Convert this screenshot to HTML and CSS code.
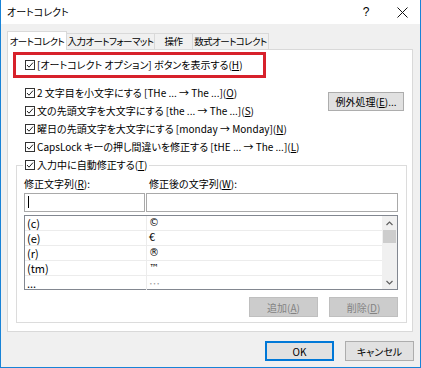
FILE: index.html
```html
<!DOCTYPE html>
<html lang="ja">
<head>
    <meta charset="UTF-8">
    <meta name="viewport" content="width=device-width, initial-scale=1.0">
    <title>オートコレクト</title>
    <link rel="stylesheet" href="styles.css">
</head>
<body>
    <div class="window">
        <div class="titlebar">
            <span class="title">オートコレクト</span>
            <span class="help">?</span>
            <span class="close">
                <svg width="11" height="11" viewBox="0 0 11 11"><path d="M0.5 0.5 L10.5 10.5 M10.5 0.5 L0.5 10.5" stroke="#111" stroke-width="1" fill="none"/></svg>
            </span>
        </div>

        <div class="tabs">
            <div class="tab active">オートコレクト</div>
            <div class="tab tab-format">入力オートフォーマット</div>
            <div class="tab tab-action">操作</div>
            <div class="tab tab-math">数式オートコレクト</div>
        </div>

        <div class="panel">
            <div class="highlight">
                <label class="check">
                    <svg class="cb" width="10" height="10" viewBox="0 0 10 10"><rect x="0.5" y="0.5" width="9" height="9" fill="#fff" stroke="#333"/><path d="M2 5 L4 7.2 L8 2.6" stroke="#222" stroke-width="1" fill="none"/></svg>
                    <span>[オートコレクト オプション] ボタンを表示する(<u>H</u>)</span>
                </label>
            </div>

            <div class="options">
                <div class="checks">
                    <label class="check">
                        <svg class="cb" width="10" height="10" viewBox="0 0 10 10"><rect x="0.5" y="0.5" width="9" height="9" fill="#fff" stroke="#333"/><path d="M2 5 L4 7.2 L8 2.6" stroke="#222" stroke-width="1" fill="none"/></svg>
                        <span>2 文字目を小文字にする [THe ... → The ...](<u>O</u>)</span>
                    </label>
                    <label class="check">
                        <svg class="cb" width="10" height="10" viewBox="0 0 10 10"><rect x="0.5" y="0.5" width="9" height="9" fill="#fff" stroke="#333"/><path d="M2 5 L4 7.2 L8 2.6" stroke="#222" stroke-width="1" fill="none"/></svg>
                        <span>文の先頭文字を大文字にする [the ... → The ...](<u>S</u>)</span>
                    </label>
                    <label class="check">
                        <svg class="cb" width="10" height="10" viewBox="0 0 10 10"><rect x="0.5" y="0.5" width="9" height="9" fill="#fff" stroke="#333"/><path d="M2 5 L4 7.2 L8 2.6" stroke="#222" stroke-width="1" fill="none"/></svg>
                        <span>曜日の先頭文字を大文字にする [monday → Monday](<u>N</u>)</span>
                    </label>
                    <label class="check">
                        <svg class="cb" width="10" height="10" viewBox="0 0 10 10"><rect x="0.5" y="0.5" width="9" height="9" fill="#fff" stroke="#333"/><path d="M2 5 L4 7.2 L8 2.6" stroke="#222" stroke-width="1" fill="none"/></svg>
                        <span>CapsLock キーの押し間違いを修正する [tHE ... → The ...](<u>L</u>)</span>
                    </label>
                </div>
                <button type="button" class="btn exceptions">例外処理(<u>E</u>)...</button>
            </div>

            <fieldset class="group">
                <legend>
                    <label class="check">
                        <svg class="cb" width="10" height="10" viewBox="0 0 10 10"><rect x="0.5" y="0.5" width="9" height="9" fill="#fff" stroke="#333"/><path d="M2 5 L4 7.2 L8 2.6" stroke="#222" stroke-width="1" fill="none"/></svg>
                        <span>入力中に自動修正する(<u>T</u>)</span>
                    </label>
                </legend>
                <div class="fields">
                    <div class="field-labels">
                        <span>修正文字列(<u>R</u>):</span>
                        <span>修正後の文字列(<u>W</u>):</span>
                    </div>
                    <div class="inputs">
                        <div class="input"><span class="caret"></span></div>
                        <div class="input"></div>
                    </div>
                    <div class="list">
                        <div class="rows">
                            <div class="row"><span class="cell">(c)</span><span class="cell sym">&#xA9;&#xFE0E;</span></div>
                            <div class="row"><span class="cell">(e)</span><span class="cell sym">€</span></div>
                            <div class="row"><span class="cell">(r)</span><span class="cell sym">&#xAE;&#xFE0E;</span></div>
                            <div class="row"><span class="cell">(tm)</span><span class="cell sym">&#x2122;&#xFE0E;</span></div>
                            <div class="row"><span class="cell">...</span><span class="cell faint">…</span></div>
                        </div>
                        <div class="scrollbar">
                            <span class="arrow"><svg width="7" height="5" viewBox="0 0 7 5"><path d="M0.5 4 L3.5 1 L6.5 4" stroke="#606060" stroke-width="1.2" fill="none"/></svg></span>
                            <span class="thumb"></span>
                            <span class="track"></span>
                            <span class="arrow"><svg width="7" height="5" viewBox="0 0 7 5"><path d="M0.5 1 L3.5 4 L6.5 1" stroke="#606060" stroke-width="1.2" fill="none"/></svg></span>
                        </div>
                    </div>
                    <div class="actions">
                        <button type="button" class="btn" disabled>追加(<u>A</u>)</button>
                        <button type="button" class="btn" disabled>削除(<u>D</u>)</button>
                    </div>
                </div>
            </fieldset>
        </div>

        <div class="footer">
            <button type="button" class="btn default">OK</button>
            <button type="button" class="btn">キャンセル</button>
        </div>
    </div>
</body>
</html>
```

FILE: styles.css
```css
body {
    margin: 0;
    font-family: "Noto Sans CJK JP", "Noto Sans", sans-serif;
    font-size: 10px;
    font-feature-settings: "palt";
    color: #000000;
    white-space: nowrap;
}

.window {
    width: 421px;
    height: 368px;
    box-sizing: border-box;
    background-color: #f0f0f0;
    border: 1px solid #1883d7;
    border-top: none;
}

.titlebar {
    height: 24px;
    display: flex;
    align-items: center;
    background-color: #ffffff;
    padding-left: 6px;
    padding-right: 8px;
}

.title {
    flex: 1;
    line-height: 24px;
}

.help {
    width: 20px;
    text-align: center;
    font-family: "Liberation Sans", sans-serif;
    font-size: 12px;
    margin-right: 16px;
}

.close {
    width: 20px;
    height: 11px;
    display: flex;
    justify-content: center;
}

.tabs {
    display: flex;
    align-items: flex-end;
    height: 19px;
    margin: 7px 0 -1px 6px;
}

.tab {
    box-sizing: border-box;
    height: 16px;
    line-height: 15px;
    margin-bottom: 1px;
    margin-left: -1px;
    text-align: center;
    font-size: 9.5px;
    letter-spacing: -0.6px;
    border: 1px solid #d9d9d9;
    border-bottom: none;
    background-color: #f0f0f0;
    overflow: hidden;
}

.tab.active {
    width: 60px;
    height: 19px;
    line-height: 18px;
    margin-left: 0;
    margin-bottom: 0;
    background-color: #ffffff;
    position: relative;
    z-index: 1;
}

.tab-format { width: 89px; }
.tab-action { width: 39px; }
.tab-math { width: 77px; }

.panel {
    box-sizing: border-box;
    height: 283px;
    margin: 0 7px 0 6px;
    background-color: #ffffff;
    border: 1px solid #d9d9d9;
}

.check {
    display: flex;
    align-items: center;
    gap: 2px;
    height: 18px;
    line-height: 18px;
}

.cb {
    flex: none;
}

.highlight {
    box-sizing: border-box;
    width: 253px;
    height: 26px;
    margin: 2px 0 0 5px;
    padding-left: 9px;
    border: 3px solid #d7212b;
    display: flex;
    align-items: center;
}

.options {
    display: flex;
    margin-top: 6px;
}

.checks {
    padding-left: 17px;
}

.btn {
    box-sizing: border-box;
    width: 69px;
    height: 20px;
    padding: 0;
    font: inherit;
    font-feature-settings: "palt";
    color: #000000;
    background-color: #e1e1e1;
    border: 1px solid #adadad;
}

.btn:disabled {
    background-color: #cccccc;
    border-color: #bfbfbf;
    color: #838383;
}

.btn.default {
    border-color: #0078d7;
    box-shadow: inset 0 0 0 1px #0078d7;
}

.exceptions {
    width: 76px;
    height: 19px;
    margin: 8px 8px 0 auto;
}

.group {
    margin: 0 5px 0 8px;
    padding: 0;
    min-width: 0;
    border: 1px solid #dcdcdc;
}

.group legend {
    margin-left: 6px;
    padding: 0 2px;
}

.fields {
    padding: 0 8px 5px 7px;
}

.field-labels {
    display: grid;
    grid-template-columns: 125px 1fr;
    height: 19px;
    line-height: 19px;
}

.inputs {
    display: grid;
    grid-template-columns: 121px 252px;
    gap: 1px;
    height: 19px;
}

.input {
    box-sizing: border-box;
    border: 1px solid #a9a9a9;
    background-color: #ffffff;
}

.caret {
    display: block;
    width: 1px;
    height: 12px;
    margin: 2px 0 0 3px;
    background-color: #000000;
}

.list {
    box-sizing: border-box;
    display: flex;
    height: 75px;
    margin-top: 3px;
    border: 1px solid #828790;
}

.rows {
    flex: 1;
    display: grid;
    grid-template-rows: repeat(5, 1fr);
}

.row {
    display: grid;
    grid-template-columns: 122px 1fr;
    border-bottom: 1px solid #ececec;
}

.row:last-child {
    border-bottom: none;
}

.cell {
    padding-left: 2px;
    font-size: 11px;
    line-height: 14px;
}

.cell:first-child {
    border-right: 1px solid #ececec;
}

.cell.sym {
    font-family: "DejaVu Sans", "Liberation Sans", sans-serif;
    font-size: 10px;
}

.cell.faint {
    color: #a0a0a0;
}

.scrollbar {
    width: 15px;
    display: flex;
    flex-direction: column;
    background-color: #f0f0f0;
}

.arrow {
    height: 14px;
    display: flex;
    align-items: center;
    justify-content: center;
}

.thumb {
    height: 13px;
    margin: 0 1px;
    background-color: #cdcdcd;
}

.track {
    flex: 1;
}

.actions {
    display: flex;
    justify-content: flex-end;
    gap: 11px;
    margin-top: 7px;
}

.footer {
    display: flex;
    justify-content: flex-end;
    gap: 11px;
    margin-top: 9px;
    padding-right: 6px;
}
```
